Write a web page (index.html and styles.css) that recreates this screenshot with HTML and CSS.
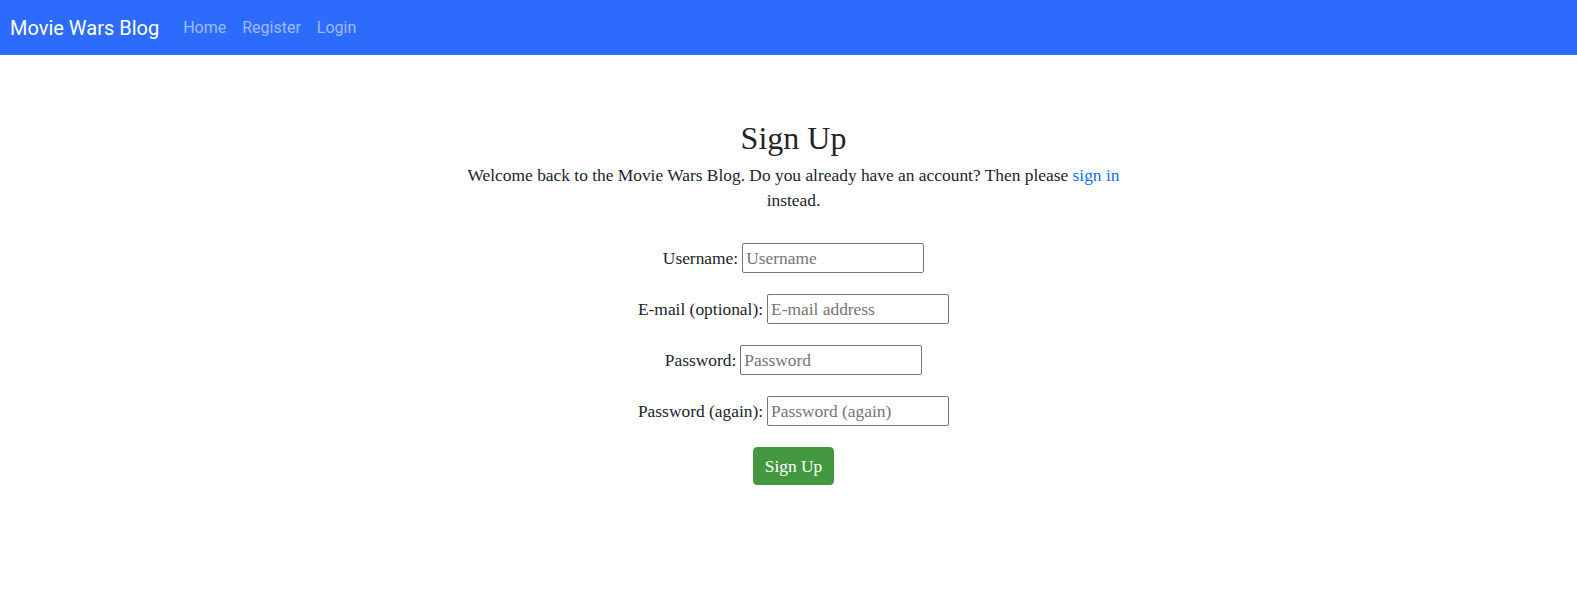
FILE: index.html
```html
<!DOCTYPE html>
<html lang="en">
<head>
<meta charset="utf-8">
<title>Movie Wars Blog - Sign Up</title>
<link rel="stylesheet" href="styles.css">
</head>
<body>
<nav class="navbar">
  <a class="brand" href="#">Movie Wars Blog</a>
  <a class="nav-link" href="#">Home</a>
  <a class="nav-link" href="#">Register</a>
  <a class="nav-link" href="#">Login</a>
</nav>
<main class="content">
  <h1 class="title">Sign Up</h1>
  <p class="intro">Welcome back to the Movie Wars Blog. Do you already have an account? Then please <a href="#">sign in</a> instead.</p>
  <form class="signup">
    <div class="row"><label for="u">Username:</label> <input id="u" type="text" placeholder="Username"></div>
    <div class="row"><label for="e">E-mail (optional):</label> <input id="e" type="email" placeholder="E-mail address"></div>
    <div class="row"><label for="p1">Password:</label> <input id="p1" type="password" placeholder="Password"></div>
    <div class="row"><label for="p2">Password (again):</label> <input id="p2" type="password" placeholder="Password (again)"></div>
    <button class="btn" type="submit">Sign Up</button>
  </form>
</main>
</body>
</html>
```

FILE: styles.css
```css
* { box-sizing: border-box; }
body {
  margin: 0;
  font-family: "Liberation Serif", "DejaVu Serif", serif;
  font-size: 17.4px;
  color: #212529;
  background: #fff;
}
.navbar {
  display: flex;
  align-items: center;
  height: 55px;
  padding: 0 10px;
  background: #2d6bfc;
  font-family: Roboto, "Liberation Sans", sans-serif;
}
.brand {
  color: #fff;
  font-size: 20px;
  text-decoration: none;
  margin-right: 16px;
}
.nav-link {
  color: rgba(255,255,255,0.55);
  font-size: 16px;
  text-decoration: none;
  padding: 0 8px;
}
.content {
  width: 680px;
  margin: 0 auto;
  padding: 64px 0 0 10px;
  text-align: center;
}
.title {
  font-size: 32px;
  font-weight: 400;
  margin: 0 0 6px;
  line-height: 38px;
}
.intro {
  margin: 0 0 30px;
  line-height: 25px;
}
.intro a { color: #0d6efd; text-decoration: none; }
.signup {
  display: flex;
  flex-direction: column;
  align-items: center;
  gap: 21px;
}
.row {
  display: flex;
  align-items: center;
  gap: 4px;
}
.row input {
  width: 182px;
  height: 30px;
  border: 1px solid #767676;
  border-radius: 2px;
  padding: 1px 3px;
  font-family: inherit;
  font-size: 17.4px;
  color: #212529;
}
.row input::placeholder { color: #757575; }
.btn {
  width: 81px;
  height: 38px;
  background: #43983f;
  color: #fff;
  border: 1px solid #43983f;
  border-radius: 4px;
  font-family: inherit;
  font-size: 17.4px;
}
```
